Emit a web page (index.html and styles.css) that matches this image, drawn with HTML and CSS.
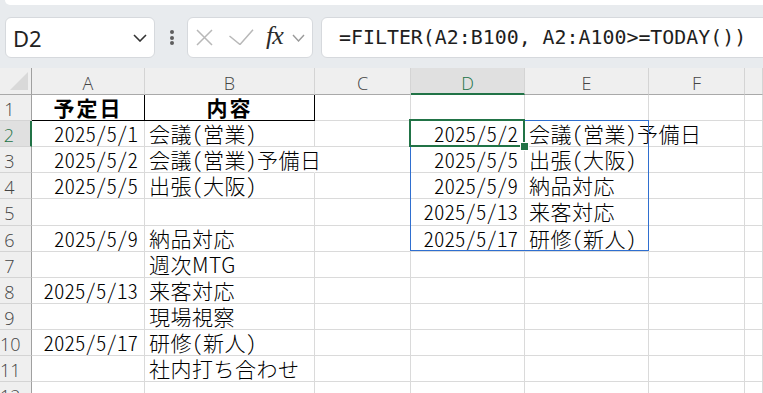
FILE: index.html
```html
<!DOCTYPE html>
<html lang="ja">
<head>
<meta charset="utf-8">
<title>Excel FILTER</title>
<link rel="stylesheet" href="styles.css">
</head>
<body>
<div class="topbar"></div>
<div class="fbar">
  <div class="namebox">
    <span class="ref">D2</span>
    <svg class="chev" width="14" height="8" viewBox="0 0 14 8"><polyline points="1,1 7,7 13,1" fill="none" stroke="#333" stroke-width="1.6"/></svg>
  </div>
  <div class="dots"><i></i><i></i><i></i></div>
  <div class="fxbox">
    <svg class="ico-x" width="17" height="17" viewBox="0 0 17 17"><path d="M1 1L16 16M16 1L1 16" stroke="#b8b8b8" stroke-width="1.5" fill="none"/></svg>
    <svg class="ico-ok" width="25" height="16" viewBox="0 0 25 16"><polyline points="0.5,7 11,15.5 24,0.7" fill="none" stroke="#b8b8b8" stroke-width="1.5"/></svg>
    <span class="fx">fx</span>
    <svg class="chev-s" width="13" height="8" viewBox="0 0 13 8"><polyline points="1,1 6.5,7 12,1" fill="none" stroke="#9a9a9a" stroke-width="1.4"/></svg>
  </div>
  <div class="formula">=FILTER(A2:B100, A2:A100&gt;=TODAY())</div>
</div>
<div class="sheet">
  <div class="h corner"><svg width="18" height="18" viewBox="0 0 18 18"><polygon points="18,0 18,18 0,18" fill="#d9d9d9"/></svg></div>
  <div class="h">A</div><div class="h">B</div><div class="h">C</div><div class="h hsel">D</div><div class="h">E</div><div class="h">F</div><div class="h"></div>

  <div class="rh">1</div><div class="c th b1">予定日</div><div class="c th b1">内容</div><div class="c"></div><div class="c"></div><div class="c"></div><div class="c"></div><div class="c"></div>
  <div class="rh rsel">2</div><div class="c n">2025/5/1</div><div class="c t">会議(営業)</div><div class="c"></div><div class="c n anchor">2025/5/2<div class="spill"></div><div class="sel"><i class="handle"></i></div></div><div class="c t over">会議(営業)予備日</div><div class="c"></div><div class="c"></div>
  <div class="rh">3</div><div class="c n">2025/5/2</div><div class="c t over">会議(営業)予備日</div><div class="c"></div><div class="c n">2025/5/5</div><div class="c t">出張(大阪)</div><div class="c"></div><div class="c"></div>
  <div class="rh">4</div><div class="c n">2025/5/5</div><div class="c t">出張(大阪)</div><div class="c"></div><div class="c n">2025/5/9</div><div class="c t">納品対応</div><div class="c"></div><div class="c"></div>
  <div class="rh">5</div><div class="c n"></div><div class="c"></div><div class="c"></div><div class="c n">2025/5/13</div><div class="c t">来客対応</div><div class="c"></div><div class="c"></div>
  <div class="rh">6</div><div class="c n">2025/5/9</div><div class="c t">納品対応</div><div class="c"></div><div class="c n">2025/5/17</div><div class="c t">研修(新人)</div><div class="c"></div><div class="c"></div>
  <div class="rh">7</div><div class="c n"></div><div class="c t">週次<span class="pw">MTG</span></div><div class="c"></div><div class="c"></div><div class="c"></div><div class="c"></div><div class="c"></div>
  <div class="rh">8</div><div class="c n">2025/5/13</div><div class="c t">来客対応</div><div class="c"></div><div class="c"></div><div class="c"></div><div class="c"></div><div class="c"></div>
  <div class="rh">9</div><div class="c n"></div><div class="c t">現場視察</div><div class="c"></div><div class="c"></div><div class="c"></div><div class="c"></div><div class="c"></div>
  <div class="rh">10</div><div class="c n">2025/5/17</div><div class="c t">研修(新人)</div><div class="c"></div><div class="c"></div><div class="c"></div><div class="c"></div><div class="c"></div>
  <div class="rh">11</div><div class="c n"></div><div class="c t">社内打ち合わせ</div><div class="c"></div><div class="c"></div><div class="c"></div><div class="c"></div><div class="c"></div>
  <div class="rh">12</div><div class="c"></div><div class="c"></div><div class="c"></div><div class="c"></div><div class="c"></div><div class="c"></div><div class="c"></div>
</div>
</body>
</html>
```
FILE: styles.css
```css
* { box-sizing: border-box; }
html, body { margin: 0; padding: 0; }
body {
  width: 763px;
  height: 393px;
  overflow: hidden;
  background: #e8ebee;
  font-family: "Noto Sans", sans-serif;
}

.topbar {
  margin-left: 5px;
  height: 5px;
  background: #fff;
  border-bottom-left-radius: 8px;
}

.fbar {
  display: flex;
  height: 41px;
  margin-top: 12px;
  padding-left: 5px;
  margin-right: -20px;
}

.namebox {
  width: 150px;
  background: #fff;
  border: 1px solid #d6d9dd;
  border-radius: 6px;
  display: flex;
  align-items: center;
  justify-content: space-between;
  padding: 0 7px 0 7px;
}
.namebox .ref {
  font: 22px "Noto Sans", sans-serif;
  color: #222;
  margin-top: 1px;
}
.namebox .chev { margin-top: 1px; }

.dots {
  width: 32px;
  display: flex;
  flex-direction: column;
  align-items: center;
  justify-content: center;
  gap: 1.5px;
  padding-left: 1px;
}
.dots i {
  display: block;
  width: 4px;
  height: 4px;
  border-radius: 50%;
  background: #5e5e5e;
}

.fxbox {
  width: 126px;
  background: #fff;
  border: 1px solid #d6d9dd;
  border-radius: 6px;
  display: flex;
  align-items: center;
}
.fxbox .ico-x { margin-left: 8px; }
.fxbox .ico-ok { margin-left: 16px; margin-top: -2px; }
.fxbox .fx {
  margin-left: 12px;
  font: italic 26px "Liberation Serif", serif;
  color: #2b2b2b;
  letter-spacing: -1px;
  margin-top: -3px;
}
.fxbox .chev-s { margin-left: 9px; }

.formula {
  flex: 1;
  margin-left: 8px;
  background: #fff;
  border: 1px solid #d6d9dd;
  border-radius: 6px;
  display: flex;
  align-items: center;
  padding-left: 17px;
  font: 19.9px "DejaVu Sans Mono", monospace;
  color: #1e1e1e;
  white-space: nowrap;
}

.sheet {
  margin-top: 10px;
  display: grid;
  grid-template-columns: 32px 113px 170px 96px 114px 124px 96px 1fr;
  grid-template-rows: 27px 26px 26px 26px 26px 27px 26px 26px 26px 26px 26px 26px 26px;
  background: #fff;
}

.h {
  background: #efefef;
  border-right: 1px solid #d4d4d4;
  border-bottom: 1px solid #a9a9a9;
  text-align: center;
  font: 18px "Open Sans", "Noto Sans", sans-serif;
  font-weight: 300;
  color: #444;
  line-height: 26px;
  padding-top: 2px;
  overflow: hidden;
}
.h.corner {
  border-right-color: #a0a0a0;
  padding: 4px 3px 0 0;
  text-align: right;
  line-height: 0;
}
.h.hsel {
  background: #e0e0e0;
  color: #217346;
  border-bottom: 2px solid #217346;
}

.rh {
  background: #efefef;
  border-right: 1px solid #a0a0a0;
  border-bottom: 1px solid #d4d4d4;
  text-align: center;
  padding-right: 12px;
  padding-top: 1px;
  font: 18px "Open Sans", "Noto Sans", sans-serif;
  font-weight: 300;
  color: #444;
  line-height: 26px;
  white-space: nowrap;
}
.rh.rsel {
  background: #e0e0e0;
  color: #217346;
  border-right: 2px solid #217346;
}

.c {
  border-right: 1px solid #dadada;
  border-bottom: 1px solid #dadada;
  font: 21px "Noto Sans CJK JP", sans-serif;
  font-weight: 300;
  font-feature-settings: "hwid";
  line-height: 25px;
  padding: 0 4px;
  white-space: nowrap;
  color: #000;
}
.c.t { letter-spacing: 0.5px; }
.c.n { text-align: right; padding-right: 6px; }
.c.over { border-right-color: transparent; }
.c.th {
  font-weight: 700;
  text-align: center;
  letter-spacing: 2px;
}
.c.b1 {
  border-right-color: #000;
  border-bottom-color: #000;
}
.pw { font-feature-settings: normal; }

.c.anchor { position: relative; }
.spill {
  position: absolute;
  left: -1px;
  top: -1px;
  width: 239px;
  height: 131px;
  border: 1px solid #2f6fd0;
}
.sel {
  position: absolute;
  left: -2px;
  top: -2px;
  width: 116px;
  height: 28px;
  border: 2px solid #217346;
}
.sel .handle {
  position: absolute;
  right: -5px;
  bottom: -5px;
  width: 7px;
  height: 7px;
  background: #217346;
  outline: 1px solid #fff;
}
```
